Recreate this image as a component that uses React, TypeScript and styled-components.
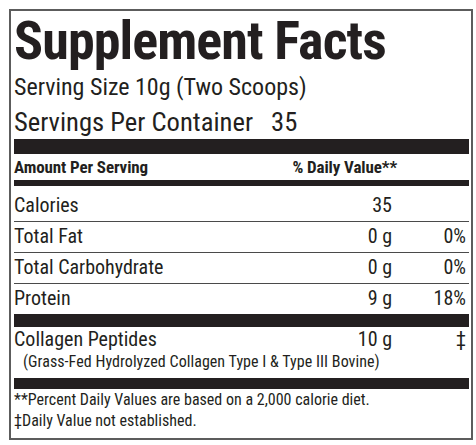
import React from "react";
import styled, { createGlobalStyle } from "styled-components";

const GlobalStyle = createGlobalStyle`
  html, body { margin: 0; padding: 0; background: #ffffff; }
  body { font-family: "Roboto Condensed", "Liberation Sans", sans-serif; color: #231f20; }
`;

const Label = styled.section`
  margin: 9px 0 0 9px;
  width: 464px;
  box-sizing: border-box;
  border: 2px solid #5c5c5c;
  padding: 0 2px 7px 3px;
  background: #fff;
`;

const Title = styled.h1`
  margin: 0;
  font-weight: 700;
  font-size: 54px;
  line-height: 59px;
  letter-spacing: -0.9px;
  white-space: nowrap;
`;

const InfoLine = styled.div<{ $size: number; $lh: number }>`
  font-size: ${(p) => p.$size}px;
  line-height: ${(p) => p.$lh}px;
  white-space: nowrap;
`;

const Count = styled.span`
  margin-left: 12px;
`;

const Bar = styled.div<{ $h: number }>`
  height: ${(p) => p.$h}px;
  background: #231f20;
`;

const HeaderRow = styled.div`
  display: flex;
  justify-content: space-between;
  font-weight: 700;
  font-size: 17px;
  line-height: 26px;
  padding-right: 72px;
  letter-spacing: -0.1px;
`;

const NutrientRow = styled.div<{ $first?: boolean; $last?: boolean }>`
  display: grid;
  grid-template-columns: 1fr 80px 74px;
  padding: ${(p) => (p.$first ? 5 : 0)}px 3px 2px 0;
  font-size: 20px;
  line-height: 28px;
  border-bottom: ${(p) => (p.$last ? "none" : "1px solid #4a4a4a")};
`;

const Cell = styled.span<{ $right?: boolean }>`
  text-align: ${(p) => (p.$right ? "right" : "left")};
  white-space: nowrap;
`;

const IngredientRow = styled.div`
  display: grid;
  grid-template-columns: 1fr 80px 74px;
  padding-right: 3px;
  font-size: 20px;
  line-height: 24px;
`;

const SubNote = styled.div`
  font-size: 16px;
  line-height: 21px;
  padding-left: 9px;
  margin-bottom: 6px;
  letter-spacing: 0.05px;
  white-space: nowrap;
`;

const Footnote = styled.div`
  font-size: 16px;
  line-height: 21px;
  white-space: nowrap;
`;

type Nutrient = { name: string; amount: string; dv: string };

const nutrients: Nutrient[] = [
  { name: "Calories", amount: "35", dv: "" },
  { name: "Total Fat", amount: "0 g", dv: "0%" },
  { name: "Total Carbohydrate", amount: "0 g", dv: "0%" },
  { name: "Protein", amount: "9 g", dv: "18%" },
];

export default function App() {
  return (
    <>
      <GlobalStyle />
      <Label>
        <Title>Supplement Facts</Title>
        <InfoLine $size={24} $lh={35}>Serving Size 10g (Two Scoops)</InfoLine>
        <InfoLine $size={26.6} $lh={34}>
          Servings Per Container <Count>35</Count>
        </InfoLine>
        <Bar $h={15} />
        <HeaderRow>
          <span>Amount Per Serving</span>
          <span>% Daily Value**</span>
        </HeaderRow>
        <Bar $h={6} />
        {nutrients.map((n, i) => (
          <NutrientRow key={n.name} $first={i === 0} $last={i === nutrients.length - 1}>
            <Cell>{n.name}</Cell>
            <Cell $right>{n.amount}</Cell>
            <Cell $right>{n.dv}</Cell>
          </NutrientRow>
        ))}
        <Bar $h={13} />
        <IngredientRow>
          <Cell>Collagen Peptides</Cell>
          <Cell $right>10 g</Cell>
          <Cell $right>‡</Cell>
        </IngredientRow>
        <SubNote>(Grass-Fed Hydrolyzed Collagen Type I &amp; Type III Bovine)</SubNote>
        <Bar $h={11} />
        <Footnote>**Percent Daily Values are based on a 2,000 calorie diet.</Footnote>
        <Footnote>‡Daily Value not established.</Footnote>
      </Label>
    </>
  );
}
